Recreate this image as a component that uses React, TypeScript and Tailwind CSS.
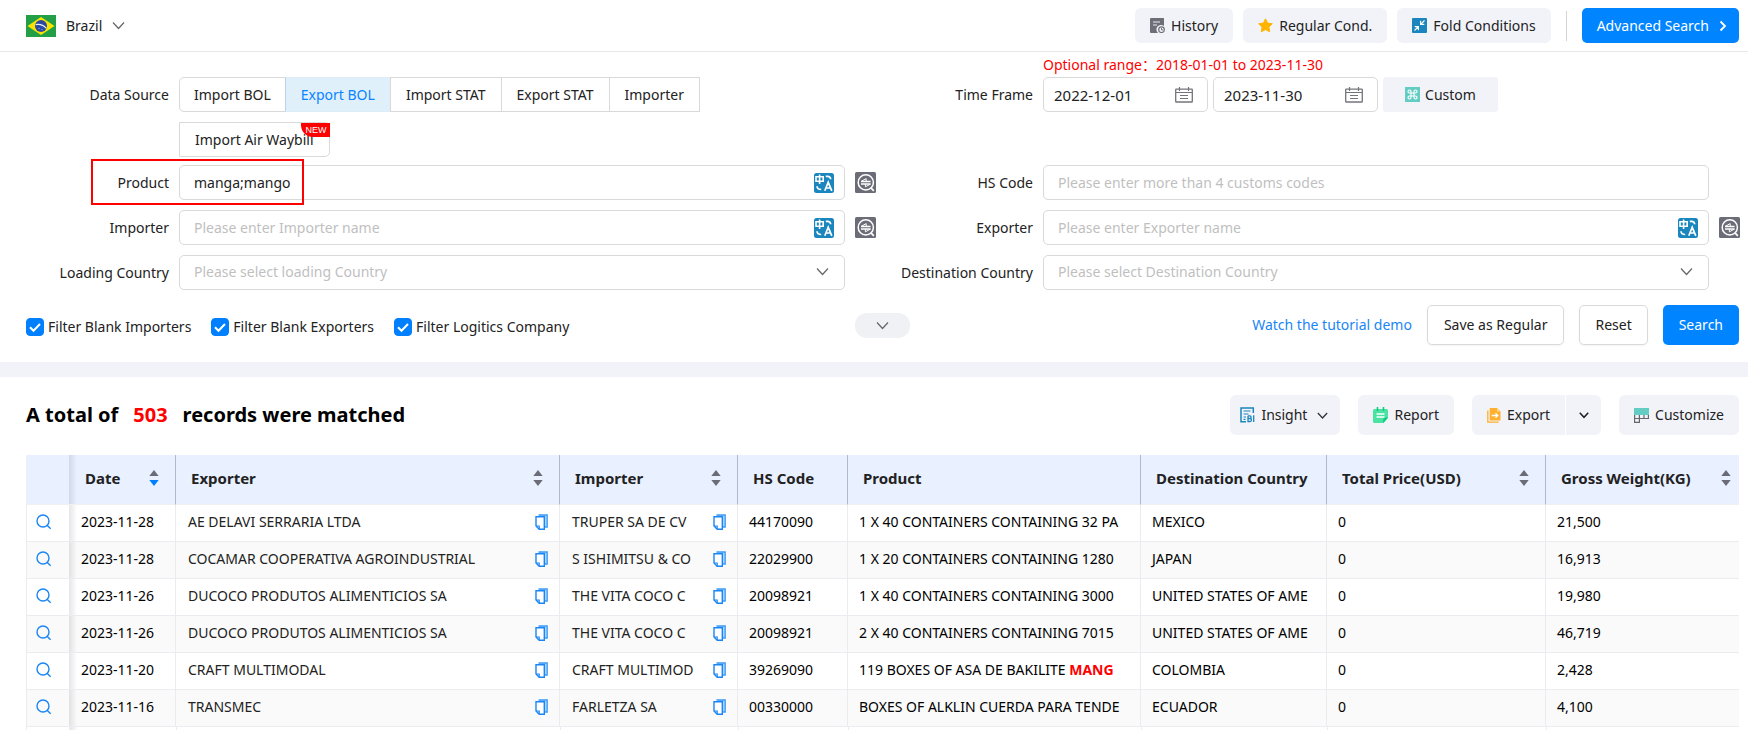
import { useState, type ReactNode } from "react";

const CONTROL = "h-[35px] rounded-[5px] border border-[#d9d9d9] bg-white";
const SOFT = "flex items-center rounded-md bg-[#f2f3f9]";

function Flag() {
  return (
    <svg width="30" height="22" viewBox="0 0 30 22" aria-hidden="true">
      <rect width="30" height="22" fill="#23a047" />
      <path d="M15 2 28.5 11 15 20 1.5 11Z" fill="#f9e300" />
      <circle cx="15" cy="11" r="6" fill="#2b49a3" />
      <path d="M9.6 9.6c4-.8 8 .6 10.6 3.6" fill="none" stroke="#e6ecf5" strokeWidth="1.2" />
      <circle cx="13" cy="13.5" r=".6" fill="#b9c6e6" />
      <circle cx="16" cy="14.5" r=".5" fill="#b9c6e6" />
    </svg>
  );
}

function Chevron({ size = 13, color = "#666", width = 1.2 }: { size?: number; color?: string; width?: number }) {
  return (
    <svg width={size} height={size} viewBox="0 0 13 13" fill="none" aria-hidden="true" className="shrink-0">
      <path d="m1 3.5 5.5 6 5.5-6" stroke={color} strokeWidth={width} />
    </svg>
  );
}

function HistoryIcon() {
  return (
    <svg width="15" height="15" viewBox="0 0 15 15" aria-hidden="true">
      <path d="M1 0h12.500a.5.500 0 0 1 .5.500V8a4.500 4.500 0 0 0-6 7H1a1 1 0 0 1-1-1V1a1 1 0 0 1 1-1Z" fill="#6e6e78" />
      <path d="M3 4h7M3 7h4" stroke="#e8e8ee" strokeWidth="1.200" />
      <circle cx="11.500" cy="11.700" r="2.800" fill="#f2f3f9" stroke="#6e6e78" strokeWidth="1.200" />
      <path d="M11.500 10.200v1.700h1.500" fill="none" stroke="#6e6e78" />
    </svg>
  );
}

function StarIcon() {
  return (
    <svg width="15" height="15" viewBox="0 0 15 15" aria-hidden="true">
      <path
        d="m7.500.8 2.100 4.300 4.700.7-3.400 3.300.8 4.700-4.200-2.200-4.200 2.200.8-4.700L.7 5.800l4.700-.7Z"
        fill="#ffb400"
        stroke="#ffb400"
        strokeLinejoin="round"
      />
    </svg>
  );
}

function FoldIcon() {
  return (
    <svg width="15" height="15" viewBox="0 0 15 15" fill="none" aria-hidden="true">
      <rect width="15" height="15" rx="1" fill="#1b85bd" />
      <path d="M12.500 2.500 9 6M8.600 2.800v3.600h3.700M2.500 12.500 6 9M2.700 8.600h3.700v3.700" stroke="#fff" strokeWidth="1.100" />
    </svg>
  );
}

function CommandIcon() {
  return (
    <svg width="15" height="15" viewBox="0 0 15 15" fill="none" aria-hidden="true">
      <rect width="15" height="15" fill="#64cdc3" />
      <path
        d="M6 6V4.500A1.500 1.500 0 1 0 4.500 6h6A1.500 1.500 0 1 0 9 4.500v6A1.500 1.500 0 1 0 10.500 9h-6A1.500 1.500 0 1 0 6 10.500Z"
        stroke="#fff"
        strokeWidth="1.100"
      />
    </svg>
  );
}

function CalendarIcon() {
  return (
    <svg width="18" height="16" viewBox="0 0 18 16" fill="none" stroke="#74747c" aria-hidden="true" className="shrink-0">
      <rect x=".7" y="2.200" width="16.600" height="12.800" rx=".6" strokeWidth="1.300" />
      <path d="M1 5.500h16M4.500 0v4M13.500 0v4M5 8.500h8M5 11.500h8" strokeWidth="1.200" />
    </svg>
  );
}

function TranslateIcon() {
  return (
    <svg width="20" height="20" viewBox="0 0 20 20" fill="none" stroke="#fff" aria-hidden="true">
      <rect width="20" height="20" rx="2.500" fill="#1b85bd" stroke="none" />
      <path d="M2 3.800h7.200v4.400H2ZM5.600 1.500v9.500" strokeWidth="1.600" />
      <path d="M11.800 3.300h1.700q3 0 3.200 3M3 13.200q.2 3.300 4.200 3.300" strokeWidth="1.700" />
      <path d="m10.800 17.800 3.400-8.500 3.600 8.500M12 15h4.600" strokeWidth="1.700" />
    </svg>
  );
}

function ExactIcon() {
  return (
    <svg width="21" height="21" viewBox="0 0 21 21" fill="none" stroke="#fff" aria-hidden="true">
      <rect width="21" height="21" rx="1.500" fill="#6b6c77" stroke="none" />
      <circle cx="10.800" cy="10.400" r="7.600" strokeWidth="1.500" />
      <path d="m16 15.900 2.800 3" strokeWidth="1.700" />
      <path d="M6 9.500h9.600M6 12h9.600" strokeWidth="1.300" />
      <path d="m6.300 9.300 4.900-2.700v2.700M15.300 12.200l-4.900 2.600v-2.600" strokeWidth="1" />
    </svg>
  );
}

function InsightIcon() {
  return (
    <svg width="15" height="16" viewBox="0 0 15 16" fill="none" stroke="#1b85bd" aria-hidden="true">
      <path d="M13.300 6V1H1v13.700h5" strokeWidth="1.500" />
      <path d="M3.500 4h7M3.500 7h5M3.500 10h2.500M3.500 12.300h2" strokeWidth="1.200" />
      <path d="M8 8.700v5.800h2a1.500 1.500 0 0 0 0-3H8h1.800a1.300 1.300 0 0 0 0-2.700H8M13.700 8.200v6.800" strokeWidth="1.300" />
    </svg>
  );
}

function ReportIcon() {
  return (
    <svg width="15" height="16" viewBox="0 0 15 16" aria-hidden="true">
      <path d="M1.500 2h12a1.500 1.500 0 0 1 1.500 1.500V11l-4.500 5h-9A1.500 1.500 0 0 1 0 14.500v-11A1.500 1.500 0 0 1 1.500 2Z" fill="#4be3a4" />
      <path d="M15 10.500 10.200 16v-3.500a2 2 0 0 1 2-2Z" fill="#0fca7d" />
      <path d="M4.500 0v4M10.500 0v4" stroke="#14c87e" strokeWidth="1.600" />
      <path d="M3.500 7h8M3.500 10h8" stroke="#fff" strokeWidth="1.400" />
    </svg>
  );
}

function ExportIcon() {
  return (
    <svg width="14" height="15" viewBox="0 0 14 15" fill="none" aria-hidden="true">
      <path d="M.8 2.500v11.700h10.700" stroke="#ffb02e" strokeWidth="1.300" />
      <path d="M2.700 0H10l3.500 3.500v9H2.700Z" fill="#ffb02e" />
      <path d="M10 0v3.500h3.500Z" fill="#ffd890" />
      <path d="M4.700 7.500h6M8.500 5.200l2.300 2.300-2.300 2.300" stroke="#fff" strokeWidth="1.300" />
    </svg>
  );
}

function CustomizeIcon() {
  return (
    <svg width="15" height="15" viewBox="0 0 15 15" fill="none" aria-hidden="true">
      <path d="M.6 6.500v7.900h4.800V6.500M.6 10.500h13.800V6.500M10 6.500v4" stroke="#66666e" strokeWidth="1.200" />
      <rect width="15" height="7" fill="#64cdc3" />
    </svg>
  );
}

function SearchIcon() {
  return (
    <svg width="16" height="16" viewBox="0 0 16 16" fill="none" stroke="#1a86f5" strokeWidth="1.400" aria-hidden="true">
      <circle cx="7" cy="7" r="6" />
      <path d="m11 11.200 3.700 3.500" />
    </svg>
  );
}

function CopyIcon() {
  return (
    <svg width="13" height="16" viewBox="0 0 13 16" fill="none" aria-hidden="true" className="shrink-0">
      <path d="M3.500 1h8.700v12H9.500" fill="#a9d4fb" stroke="#3d9bf7" strokeWidth="1.300" />
      <path d="M1 2.800h8.300v12.400H4.200L1 12Z" fill="#fff" stroke="#1a86f5" strokeWidth="1.400" />
      <path d="M1 12h3.200v3" stroke="#1a86f5" strokeWidth="1.200" />
    </svg>
  );
}

function SortIcon({ desc = false }: { desc?: boolean }) {
  return (
    <svg width="10" height="16" viewBox="0 0 10 16" aria-hidden="true" className="shrink-0">
      <path d="M5 0 9.700 6H.3Z" fill="#6b6c77" />
      <path d="M5 16 9.700 10H.3Z" fill={desc ? "#0080ff" : "#6b6c77"} />
    </svg>
  );
}

function Field({ label, id, side, children }: { label: string; id: string; side?: ReactNode; children: ReactNode }) {
  return (
    <div className="relative flex items-center gap-2.5">
      <label htmlFor={id} className="w-[154px] shrink-0 text-right">
        {label}
      </label>
      <div className="relative min-w-0 flex-1">{children}</div>
      <div className="flex w-[21px] shrink-0">{side}</div>
    </div>
  );
}

function TextField({ id, placeholder, value, translate }: { id: string; placeholder?: string; value?: string; translate?: boolean }) {
  return (
    <div className={`${CONTROL} flex items-center pr-2.5 pl-3.5`}>
      <input
        id={id}
        defaultValue={value}
        placeholder={placeholder}
        className="h-full min-w-0 flex-1 bg-transparent outline-none placeholder:text-[#bfbfbf]"
      />
      {translate && (
        <button type="button" aria-label="Translate">
          <TranslateIcon />
        </button>
      )}
    </div>
  );
}

function SelectField({ id, placeholder }: { id: string; placeholder: string }) {
  return (
    <>
      <select id={id} className={`${CONTROL} w-full appearance-none px-3.5 pb-0.5 text-[#bfbfbf] outline-none`}>
        <option>{placeholder}</option>
      </select>
      <span className="pointer-events-none absolute top-2.5 right-4">
        <Chevron />
      </span>
    </>
  );
}

function ExactButton() {
  return (
    <button type="button" aria-label="Exact match">
      <ExactIcon />
    </button>
  );
}

function DateBox({ label, value }: { label: string; value: string }) {
  return (
    <div className={`${CONTROL} flex w-[165px] items-center pr-3.5 pl-2.5`}>
      <input aria-label={label} defaultValue={value} className="h-full min-w-0 flex-1 bg-transparent text-[15px] outline-none" />
      <CalendarIcon />
    </div>
  );
}

function Check({ label }: { label: string }) {
  const [on, setOn] = useState(true);
  return (
    <label className="flex items-center gap-1">
      <span className="relative flex size-[18px]">
        <input
          type="checkbox"
          checked={on}
          onChange={() => setOn(!on)}
          className="size-full appearance-none rounded-sm border border-[#d9d9d9] bg-white checked:border-[#0080ff] checked:bg-[#0080ff]"
        />
        <svg viewBox="0 0 18 18" fill="none" className="pointer-events-none absolute inset-0" aria-hidden="true">
          <path d="m4 9.200 3.500 3.600L14 6" stroke="#fff" strokeWidth="2" />
        </svg>
      </span>
      {label}
    </label>
  );
}

const SOURCES = ["Import BOL", "Export BOL", "Import STAT", "Export STAT", "Importer"];

const COLUMNS = [
  { name: "Date", width: "w-[107px]", sort: true, desc: true },
  { name: "Exporter", width: "w-[384px]", sort: true },
  { name: "Importer", width: "w-[178px]", sort: true },
  { name: "HS Code", width: "w-[110px]" },
  { name: "Product", width: "" },
  { name: "Destination Country", width: "w-[186px]" },
  { name: "Total Price(USD)", width: "w-[219px]", sort: true },
  { name: "Gross Weight(KG)", width: "w-[193px]", sort: true },
];

type Row = [string, string, string, string, string, string, string, string];

const ROWS: Row[] = [
  ["2023-11-28", "AE DELAVI SERRARIA LTDA", "TRUPER SA DE CV", "44170090", "1 X 40 CONTAINERS CONTAINING 32 PA", "MEXICO", "0", "21,500"],
  ["2023-11-28", "COCAMAR COOPERATIVA AGROINDUSTRIAL", "S ISHIMITSU & CO", "22029900", "1 X 20 CONTAINERS CONTAINING 1280", "JAPAN", "0", "16,913"],
  ["2023-11-26", "DUCOCO PRODUTOS ALIMENTICIOS SA", "THE VITA COCO C", "20098921", "1 X 40 CONTAINERS CONTAINING 3000", "UNITED STATES OF AME", "0", "19,980"],
  ["2023-11-26", "DUCOCO PRODUTOS ALIMENTICIOS SA", "THE VITA COCO C", "20098921", "2 X 40 CONTAINERS CONTAINING 7015", "UNITED STATES OF AME", "0", "46,719"],
  ["2023-11-20", "CRAFT MULTIMODAL", "CRAFT MULTIMOD", "39269090", "119 BOXES OF ASA DE BAKILITE MANG", "COLOMBIA", "0", "2,428"],
  ["2023-11-16", "TRANSMEC", "FARLETZA SA", "00330000", "BOXES OF ALKLIN CUERDA PARA TENDE", "ECUADOR", "0", "4,100"],
];

function highlight(text: string) {
  return text.split(/(MANG)/).map((part, i) =>
    part === "MANG" ? (
      <b key={i} className="text-[#ff0000]">
        {part}
      </b>
    ) : (
      part
    ),
  );
}

const PIN_SHADOW = "bg-[linear-gradient(to_right,rgba(60,60,90,0.13),transparent_8px)]";

function Results() {
  return (
    <table className="w-full table-fixed border-separate border-spacing-0">
      <colgroup>
        <col className="w-[43px]" />
        {COLUMNS.map((c) => (
          <col key={c.name} className={c.width} />
        ))}
      </colgroup>
      <thead>
        <tr className="h-[50px] bg-[#e9f0ff] text-[15px]">
          <th aria-label="Details" className="border-b border-[#f0f0f0]" />
          {COLUMNS.map((c, i) => (
            <th
              key={c.name}
              scope="col"
              className={`border-b border-b-[#f0f0f0] pb-1 text-left font-bold whitespace-nowrap ${
                i < COLUMNS.length - 1 ? "border-r border-r-[#b4b8c8]" : ""
              } ${i === 0 ? `px-4 ${PIN_SHADOW}` : i === 7 ? "pr-2 pl-[15px]" : "pr-4 pl-[15px]"}`}
            >
              <span className="flex items-center justify-between">
                {c.name}
                {c.sort && (
                  <button type="button" aria-label={`Sort by ${c.name}`}>
                    <SortIcon desc={c.desc} />
                  </button>
                )}
              </span>
            </th>
          ))}
        </tr>
      </thead>
      <tbody className="text-[14px] text-black">
        {ROWS.map((row, r) => (
          <tr key={r} className={`h-[37px] ${r % 2 ? "bg-[#fafafa]" : "bg-white"}`}>
            <td className="border-b border-l border-[#ececf0] pb-0.5 pl-[9px]">
              <button type="button" aria-label="View record" className="flex">
                <SearchIcon />
              </button>
            </td>
            {row.map((cell, i) => (
              <td
                key={i}
                className={`border-b border-[#ececf0] pb-0.5 whitespace-nowrap ${i < 3 ? "pl-3" : "pl-[11px]"} ${
                  i < 7 ? "border-r" : ""
                } ${i === 0 ? PIN_SHADOW : ""}`}
              >
                {i === 1 || i === 2 ? (
                  <span className="flex items-center justify-between pr-[11px] text-[#222]">
                    {cell}
                    <button type="button" aria-label={`Copy ${cell}`}>
                      <CopyIcon />
                    </button>
                  </span>
                ) : i === 4 ? (
                  highlight(cell)
                ) : (
                  cell
                )}
              </td>
            ))}
          </tr>
        ))}
        <tr className="h-[37px]" aria-hidden="true">
          {Array.from({ length: 9 }, (_, i) => (
            <td key={i} className={`border-l border-[#ececf0] ${i === 1 ? PIN_SHADOW : ""}`} />
          ))}
        </tr>
      </tbody>
    </table>
  );
}

export default function App() {
  const [source, setSource] = useState("Export BOL");
  return (
    <div className="flex h-screen flex-col overflow-hidden bg-white font-['Noto_Sans','Noto_Sans_CJK_SC',sans-serif] text-[14px] leading-5 text-[#222]">
      <header className="flex h-[52px] shrink-0 items-center justify-between border-b border-[#e8e8e8] pr-[9px] pl-[26px]">
        <button type="button" className="flex items-center gap-2.5">
          <Flag />
          Brazil
          <Chevron />
        </button>
        <div className="flex items-center gap-2.5">
          <button type="button" className={`${SOFT} h-[35px] gap-1.5 px-[15px]`}>
            <HistoryIcon />
            History
          </button>
          <button type="button" className={`${SOFT} h-[35px] gap-1.5 px-[15px]`}>
            <StarIcon />
            Regular Cond.
          </button>
          <button type="button" className={`${SOFT} h-[35px] gap-1.5 px-[15px]`}>
            <FoldIcon />
            Fold Conditions
          </button>
          <span className="mx-[5px] h-[30px] w-px bg-[#d4d4d8]" />
          <button type="button" className="flex h-[35px] items-center gap-2.5 rounded-[5px] bg-[#0084ff] pr-3 pl-[15px] text-white">
            Advanced Search
            <svg width="8" height="12" viewBox="0 0 8 12" fill="none" aria-hidden="true">
              <path d="m1.500 1.500 4.500 4.500-4.500 4.500" stroke="#fff" strokeWidth="1.800" />
            </svg>
          </button>
        </div>
      </header>

      <form className="shrink-0" onSubmit={(e) => e.preventDefault()}>
        <div className="grid grid-cols-2 gap-[3px] pr-2 pl-[15px]">
          <div className="flex gap-2.5 pt-[25px]">
            <span id="source" className="w-[154px] shrink-0 text-right leading-[35px]">
              Data Source
            </span>
            <div role="group" aria-labelledby="source" className="flex flex-1 flex-wrap gap-y-2.5">
              {SOURCES.map((s) => (
                <button
                  key={s}
                  type="button"
                  onClick={() => setSource(s)}
                  className={`-ml-px h-[35px] border px-[15px] first:ml-0 first:rounded-l-[5px] first:px-3.5 ${
                    s === source ? "border-[#dcedf8] border-l-[#b9d3e2] bg-[#dff0fb] text-[#0a84ff]" : "border-[#d9d9d9] bg-white"
                  }`}
                >
                  {s}
                </button>
              ))}
              <button type="button" className="relative h-[35px] rounded-r-[5px] border border-[#d9d9d9] bg-white px-[15px]">
                Import Air Waybill
                <span className="absolute top-0 -right-px flex h-3.5 w-[29px] items-center justify-center rounded-bl-[12px] bg-[#ff0000] pl-0.5 font-['Liberation_Sans',sans-serif] text-[9px] text-white">
                  NEW
                </span>
              </button>
            </div>
            <span className="w-[21px] shrink-0" />
          </div>
          <div className="flex gap-2.5">
            <span className="w-[154px] shrink-0 pt-[25px] text-right leading-[35px]">Time Frame</span>
            <div className="flex-1">
              <p className="h-[25px] pt-[3px] text-[#ff0000]">Optional range：2018-01-01 to 2023-11-30</p>
              <div className="flex gap-[5px]">
                <DateBox label="Start date" value="2022-12-01" />
                <DateBox label="End date" value="2023-11-30" />
                <button type="button" className="flex h-[35px] w-[115px] items-center justify-center gap-[5px] rounded-[3px] bg-[#f2f3f9]">
                  <CommandIcon />
                  Custom
                </button>
              </div>
            </div>
          </div>
        </div>

        <div className="mt-2 grid grid-cols-2 gap-x-[3px] gap-y-2.5 pr-2 pl-[15px]">
          <div className="relative">
            <Field label="Product" id="product" side={<ExactButton />}>
              <TextField id="product" value="manga;mango" translate />
            </Field>
            <span className="pointer-events-none absolute -top-[6px] -bottom-[5px] left-[76px] w-[213px] border-2 border-[#ff0000]" />
          </div>
          <Field label="HS Code" id="hs">
            <TextField id="hs" placeholder="Please enter more than 4 customs codes" />
          </Field>
          <Field label="Importer" id="importer" side={<ExactButton />}>
            <TextField id="importer" placeholder="Please enter Importer name" translate />
          </Field>
          <Field label="Exporter" id="exporter" side={<ExactButton />}>
            <TextField id="exporter" placeholder="Please enter Exporter name" translate />
          </Field>
          <Field label="Loading Country" id="loading">
            <SelectField id="loading" placeholder="Please select loading Country" />
          </Field>
          <Field label="Destination Country" id="destination">
            <SelectField id="destination" placeholder="Please select Destination Country" />
          </Field>
        </div>

        <div className="grid grid-cols-[1fr_auto_1fr] items-center pt-[15px] pr-[9px] pb-[17px] pl-[26px]">
          <div className="flex items-center gap-5 pt-1">
            <Check label="Filter Blank Importers" />
            <Check label="Filter Blank Exporters" />
            <Check label="Filter Logitics Company" />
          </div>
          <button type="button" aria-label="More conditions" className="flex h-[25px] w-[55px] items-center justify-center rounded-xl bg-[#f0f1f5]">
            <Chevron />
          </button>
          <div className="flex items-center justify-end gap-[15px]">
            <a href="#demo" className="text-[#1a86f5]">
              Watch the tutorial demo
            </a>
            <button type="button" className="h-10 rounded-[5px] border border-[#d9d9d9] px-4 shadow-xs">
              Save as Regular
            </button>
            <button type="reset" className="h-10 rounded-[5px] border border-[#d9d9d9] px-[15px] shadow-xs">
              Reset
            </button>
            <button type="submit" className="h-10 rounded-[5px] bg-[#0084ff] px-4 text-white">
              Search
            </button>
          </div>
        </div>
      </form>

      <div className="h-[15px] shrink-0 bg-[#f2f3f9]" />

      <section className="min-h-0 flex-1 pt-[18px] pr-[9px] pl-[26px]">
        <div className="mb-5 flex items-center justify-between">
          <h1 className="flex gap-[15px] text-[20px] font-bold text-black">
            A total of <span className="text-[#ff0000]">503</span> records were matched
          </h1>
          <div className="flex gap-[18px]">
            <button type="button" className={`${SOFT} h-10 gap-1.5 pr-3 pl-2.5`}>
              <InsightIcon />
              Insight
              <span className="flex pl-1">
                <Chevron size={11} color="#333" width={1.500} />
              </span>
            </button>
            <button type="button" className={`${SOFT} h-10 gap-1.5 px-[15px]`}>
              <ReportIcon />
              Report
            </button>
            <div className="flex gap-px">
              <button type="button" className="flex h-10 items-center gap-1.5 rounded-l-md bg-[#f2f3f9] px-[15px]">
                <ExportIcon />
                Export
              </button>
              <button type="button" aria-label="Export options" className="flex h-10 w-[35px] items-center justify-center rounded-r-md bg-[#f2f3f9]">
                <Chevron size={10} color="#222" width={2} />
              </button>
            </div>
            <button type="button" className={`${SOFT} h-10 gap-1.5 px-[15px]`}>
              <CustomizeIcon />
              Customize
            </button>
          </div>
        </div>
        <Results />
      </section>
    </div>
  );
}
